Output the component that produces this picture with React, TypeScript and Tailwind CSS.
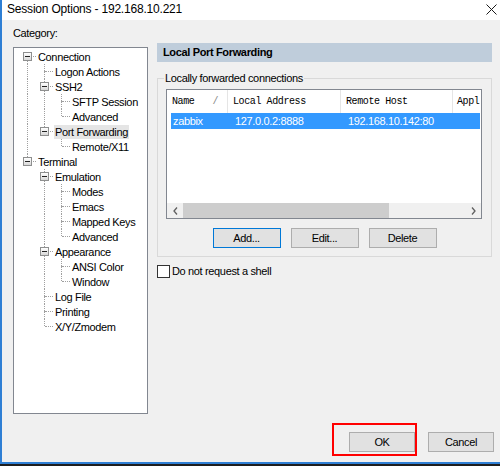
import React from "react";

type TreeRow = {
    label: string;
    guides: boolean[];
    last: boolean;
    children?: boolean;
    firstRoot?: boolean;
    selected?: boolean;
};

const treeRows: TreeRow[] = [
    { label: "Connection", guides: [], last: false, children: true, firstRoot: true },
    { label: "Logon Actions", guides: [true], last: false },
    { label: "SSH2", guides: [true], last: false, children: true },
    { label: "SFTP Session", guides: [true, true], last: false },
    { label: "Advanced", guides: [true, true], last: true },
    { label: "Port Forwarding", guides: [true], last: true, children: true, selected: true },
    { label: "Remote/X11", guides: [true, false], last: true },
    { label: "Terminal", guides: [], last: true, children: true },
    { label: "Emulation", guides: [false], last: false, children: true },
    { label: "Modes", guides: [false, true], last: false },
    { label: "Emacs", guides: [false, true], last: false },
    { label: "Mapped Keys", guides: [false, true], last: false },
    { label: "Advanced", guides: [false, true], last: true },
    { label: "Appearance", guides: [false], last: false, children: true },
    { label: "ANSI Color", guides: [false, true], last: false },
    { label: "Window", guides: [false, true], last: true },
    { label: "Log File", guides: [false], last: false },
    { label: "Printing", guides: [false], last: false },
    { label: "X/Y/Zmodem", guides: [false], last: true },
];

const ui = "font-['Liberation_Sans',Arial,sans-serif] text-[11px] tracking-[-0.35px] text-black";
const mono = "font-['Liberation_Mono','Courier_New',monospace] text-[10px] tracking-[-0.4px] text-black";

function Row({ row }: { row: TreeRow }) {
    return (
        <div className="flex h-[15px] items-center">
            {row.guides.map((g, i) => (
                <div key={i} className="relative w-[17px] h-[15px] shrink-0">
                    {g && <div className="absolute left-[8px] top-0 h-full border-l border-dotted border-[#a0a0a0]" />}
                </div>
            ))}
            <div className="relative w-[17px] h-[15px] shrink-0">
                {!row.firstRoot && <div className="absolute left-[8px] top-0 h-[7px] border-l border-dotted border-[#a0a0a0]" />}
                {!row.last && <div className="absolute left-[8px] top-[7px] h-[8px] border-l border-dotted border-[#a0a0a0]" />}
                <div className="absolute left-[9px] top-[7px] w-[8px] border-t border-dotted border-[#a0a0a0]" />
                {row.children && (
                    <div className="absolute left-[4px] top-[3px] w-[9px] h-[9px] border border-[#8e8f8f] bg-gradient-to-b from-white to-[#d8d8d8]">
                        <div className="absolute left-[1px] top-[3px] w-[5px] h-[1px] bg-[#222]" />
                    </div>
                )}
            </div>
            <span className={`ml-[1px] px-[1px] leading-[14px] whitespace-nowrap ${row.selected ? "bg-[#e5e5e5]" : ""}`}>
                {row.label}
            </span>
        </div>
    );
}

function Button({ label, focused, width }: { label: string; focused?: boolean; width: string }) {
    return (
        <div
            className={`${width} h-[20px] flex items-center justify-center bg-[#e1e1e1] border ${
                focused ? "border-[#0078d7]" : "border-[#adadad]"
            }`}
        >
            {label}
        </div>
    );
}

export default function App() {
    return (
        <div className={`relative w-[500px] h-[466px] overflow-hidden bg-[#f0f0f0] ${ui}`}>
            <div className="h-[464px] flex flex-col border-l-2 border-b-2 border-[#2f7fd4]">
                {/* Title bar */}
                <div className="h-[20px] bg-white flex items-center justify-between pl-[5px] pr-[3px] pb-[3px] shrink-0">
                    <span className="text-[12px] tracking-[-0.2px]">Session Options - 192.168.10.221</span>
                    <svg width="11" height="11" viewBox="0 0 11 11" className="mt-[1px]">
                        <path d="M0.5 0.5 L10.5 10.5 M10.5 0.5 L0.5 10.5" stroke="#1a1a1a" strokeWidth="1" />
                    </svg>
                </div>

                <div className="flex-1 flex flex-col">
                    <div className="flex pl-[11px] pt-[6px]">
                        {/* Category tree */}
                        <div className="w-[135px] shrink-0">
                            <div className="leading-[14px]">Category:</div>
                            <div className="mt-[7px] h-[367px] bg-white border border-[#828790] pl-[5px] pt-[1px]">
                                {treeRows.map((r, i) => (
                                    <Row key={i} row={r} />
                                ))}
                            </div>
                        </div>

                        {/* Right pane */}
                        <div className="ml-[9px] w-[335px] pt-[17px]">
                            <div className="h-[19px] bg-[#bfcddb] flex items-center pl-[6px] font-bold">
                                Local Port Forwarding
                            </div>

                            <fieldset className="mt-[10px] border border-[#d9d9d9] px-[8px] pb-[8px]">
                                <legend className="ml-[-2px] px-[1px] leading-[13px]">Locally forwarded connections</legend>
                                <div className="mt-[4px] w-[316px] h-[130px] bg-white border border-[#828790] flex flex-col">
                                    <div className={`h-[23px] flex shrink-0 ${mono}`}>
                                        <div className="w-[61px] border-r border-[#e5e5e5] flex items-center pl-[5px]">
                                            <span>Name</span>
                                            <span className="ml-[18px] text-[#888]">/</span>
                                        </div>
                                        <div className="w-[113px] border-r border-[#e5e5e5] flex items-center pl-[5px]">
                                            Local Address
                                        </div>
                                        <div className="w-[112px] border-r border-[#e5e5e5] flex items-center pl-[5px]">
                                            Remote Host
                                        </div>
                                        <div className="flex-1 flex items-center pl-[4px] overflow-hidden whitespace-nowrap">
                                            Appl
                                        </div>
                                    </div>
                                    <div className="h-[16px] ml-[4px] mr-[1px] bg-[#3399ff] text-white flex items-center shrink-0">
                                        <div className="w-[57px] pl-[2px]">zabbix</div>
                                        <div className="w-[113px] pl-[7px]">127.0.0.2:8888</div>
                                        <div className="pl-[7px]">192.168.10.142:80</div>
                                    </div>
                                    <div className="flex-1" />
                                    <div className="h-[15px] bg-[#f0f0f0] flex items-center shrink-0">
                                        <div className="w-[16px] flex justify-center">
                                            <svg width="5" height="8" viewBox="0 0 5 8">
                                                <path d="M4 0.5 L1 4 L4 7.5" fill="none" stroke="#606060" strokeWidth="1.3" />
                                            </svg>
                                        </div>
                                        <div className="w-[206px] h-[15px] bg-[#cdcdcd]" />
                                        <div className="flex-1" />
                                        <div className="w-[16px] flex justify-center">
                                            <svg width="5" height="8" viewBox="0 0 5 8">
                                                <path d="M1 0.5 L4 4 L1 7.5" fill="none" stroke="#606060" strokeWidth="1.3" />
                                            </svg>
                                        </div>
                                    </div>
                                </div>
                                <div className="mt-[9px] flex justify-center gap-[10px]">
                                    <Button label="Add..." focused width="w-[68px]" />
                                    <Button label="Edit..." width="w-[68px]" />
                                    <Button label="Delete" width="w-[68px]" />
                                </div>
                            </fieldset>

                            <div className="mt-[8px] flex items-center h-[13px]">
                                <div className="w-[13px] h-[13px] bg-white border border-[#333]" />
                                <span className="ml-[2px]">Do not request a shell</span>
                            </div>
                        </div>
                    </div>

                    {/* Dialog buttons */}
                    <div className="mt-auto flex justify-end gap-[13px] pr-[6px] pb-[10px]">
                        <Button label="OK" width="w-[66px]" />
                        <Button label="Cancel" width="w-[66px]" />
                    </div>
                </div>
            </div>
            <div className="h-[2px] bg-[#1e1e1e]" />

            {/* annotation */}
            <div className="absolute left-[332px] top-[423px] w-[85px] h-[33px] border-2 border-[#ff0000]" />
        </div>
    );
}
